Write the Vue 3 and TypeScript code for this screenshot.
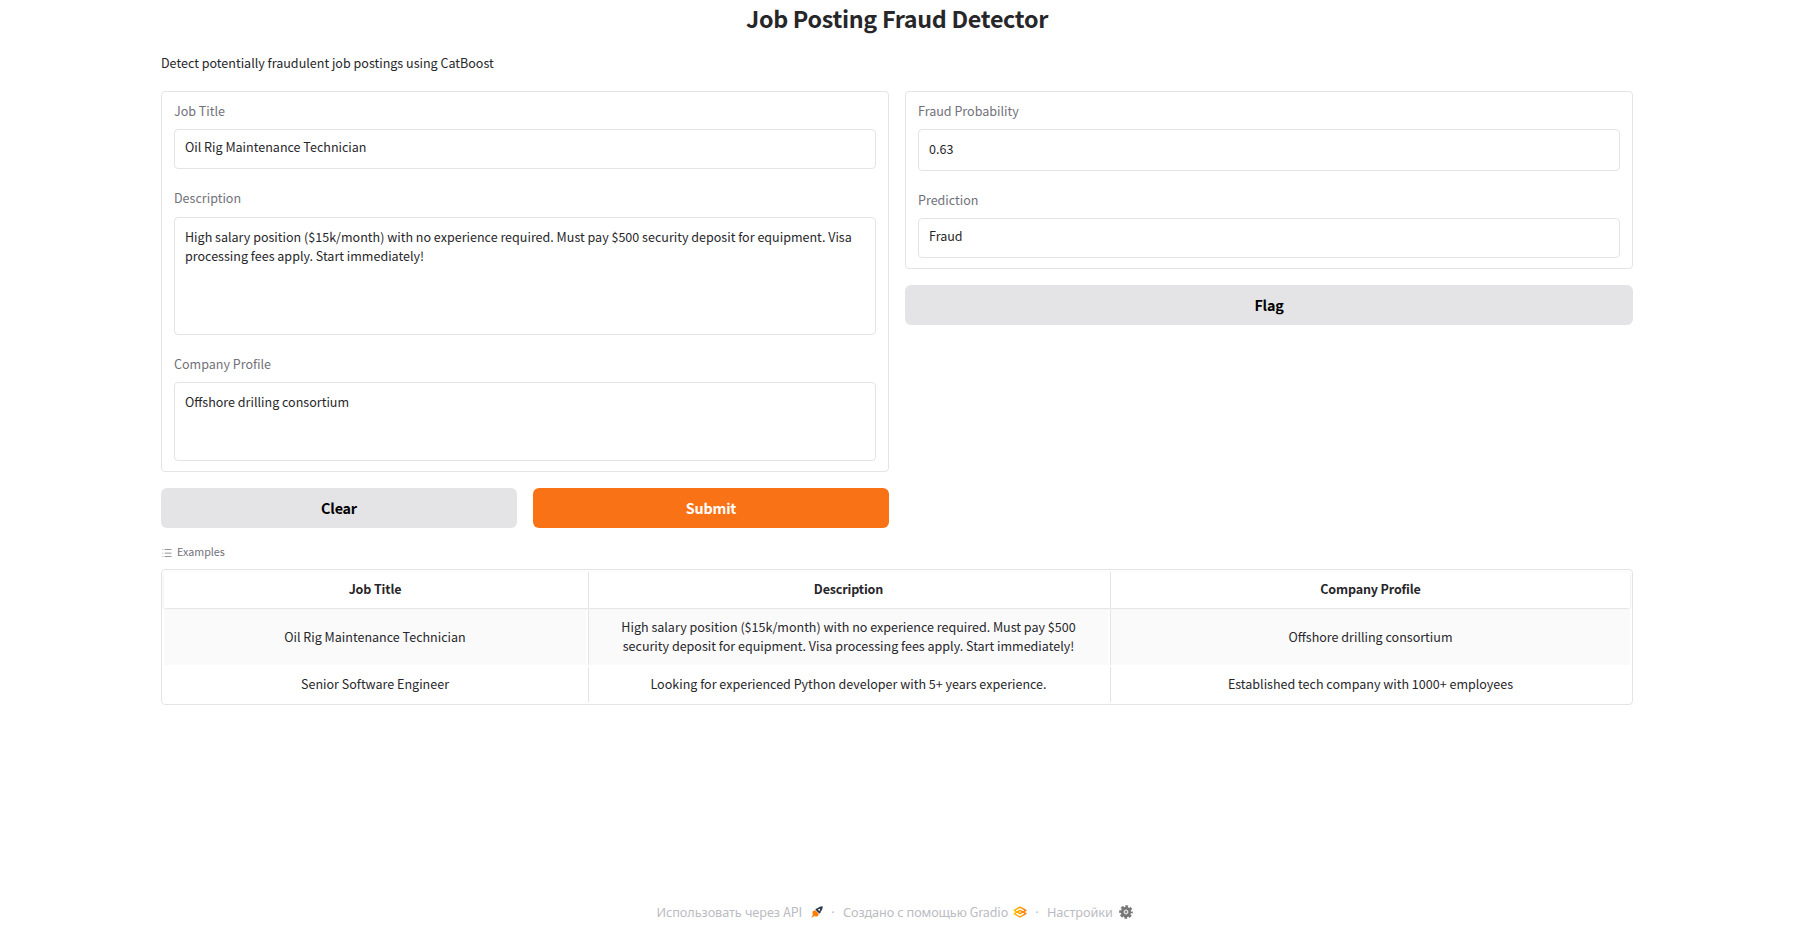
<script setup lang="ts">
import { ref } from 'vue'

interface Example {
  title: string
  description: string
  company: string
}

const examples: Example[] = [
  {
    title: 'Oil Rig Maintenance Technician',
    description:
      'High salary position ($15k/month) with no experience required. Must pay $500 security deposit for equipment. Visa processing fees apply. Start immediately!',
    company: 'Offshore drilling consortium',
  },
  {
    title: 'Senior Software Engineer',
    description: 'Looking for experienced Python developer with 5+ years experience.',
    company: 'Established tech company with 1000+ employees',
  },
]

const title = ref(examples[0].title)
const description = ref(examples[0].description)
const company = ref(examples[0].company)
const probability = ref('0.63')
const prediction = ref('Fraud')

function load(example: Example) {
  title.value = example.title
  description.value = example.description
  company.value = example.company
}

function clear() {
  title.value = ''
  description.value = ''
  company.value = ''
  probability.value = ''
  prediction.value = ''
}
</script>

<template>
  <div class="app">
    <h1>Job Posting Fraud Detector</h1>
    <p class="lead">Detect potentially fraudulent job postings using CatBoost</p>

    <div class="columns">
      <section>
        <div class="panel">
          <label class="field">
            <span class="label">Job Title</span>
            <textarea v-model="title" class="box one" spellcheck="false"></textarea>
          </label>
          <label class="field roomy">
            <span class="label">Description</span>
            <textarea v-model="description" class="box five" spellcheck="false"></textarea>
          </label>
          <label class="field">
            <span class="label">Company Profile</span>
            <textarea v-model="company" class="box three" spellcheck="false"></textarea>
          </label>
        </div>
        <div class="actions">
          <button class="btn" @click="clear">Clear</button>
          <button class="btn primary">Submit</button>
        </div>
      </section>

      <section>
        <div class="panel">
          <label class="field">
            <span class="label">Fraud Probability</span>
            <input v-model="probability" class="box number" readonly />
          </label>
          <label class="field">
            <span class="label">Prediction</span>
            <textarea v-model="prediction" class="box one" readonly></textarea>
          </label>
        </div>
        <div class="actions">
          <button class="btn">Flag</button>
        </div>
      </section>
    </div>

    <div class="examples-label">
      <svg viewBox="0 0 32 32" width="12" height="12">
        <path fill="currentColor" d="M10 6h18v2H10zm0 18h18v2H10zm0-9h18v2H10zm-6 0h2v2H4zm0-9h2v2H4zm0 18h2v2H4z" />
      </svg>
      <span>Examples</span>
    </div>

    <div class="table">
      <div class="row head">
        <div>Job Title</div>
        <div>Description</div>
        <div>Company Profile</div>
      </div>
      <div v-for="(e, i) in examples" :key="i" class="row" :class="{ odd: i % 2 === 0 }" @click="load(e)">
        <div>{{ e.title }}</div>
        <div>{{ e.description }}</div>
        <div>{{ e.company }}</div>
      </div>
    </div>

    <footer>
      <a class="api"><span>Использовать через <b>API</b></span>
        <svg class="rocket" viewBox="0 0 24 24" width="12" height="12">
          <path d="M23.5.5c-4.500 0-8 1.500-10.500 4l-3.500 1-.5 1.500 2.500 3.500 2 2L17 15l1.500-.5 1-3.500c2.500-2.500 4-6 4-10.500z" fill="#2c3a4b" />
          <circle cx="16.500" cy="7.500" r="1.900" fill="#fff" />
          <path d="M8.500 8.500 4 10 2.500 15l2 1L.5 23.500 8 19.500l1.500 2L14 20l1.500-4.500z" fill="#ff7c00" />
        </svg>
      </a>
      <i class="dot">·</i>
      <a class="built"><span>Создано с помощью <b>Gradio</b></span>
        <svg viewBox="50 80 475 415" width="14" height="12" fill="none" stroke-width="48" stroke-linejoin="round">
          <defs>
            <linearGradient id="amber" x1="60" y1="340" x2="520" y2="340" gradientUnits="userSpaceOnUse">
              <stop stop-color="#ffc400" />
              <stop offset="1" stop-color="#ff7000" />
            </linearGradient>
          </defs>
          <path d="M287.500 229 86 344.500 287.500 460 489 344.500z" stroke="url(#amber)" />
          <path d="M287.500 116 86 231.500 287.500 347 489 231.500z" stroke="url(#amber)" />
        </svg>
      </a>
      <i class="dot">·</i>
      <a class="settings"><span>Настройки</span>
        <svg viewBox="0 0 24 24" width="14" height="14" fill="none">
          <circle cx="12" cy="12" r="9.700" stroke="#777" stroke-width="4" stroke-dasharray="4.600 3.018" stroke-dashoffset="2.300" />
          <circle cx="12" cy="12" r="6.300" stroke="#777" stroke-width="5" />
          <circle cx="12" cy="12" r="3.600" stroke="#c4c4c4" stroke-width="1.500" />
          <circle cx="12" cy="12" r="2" fill="#888" />
        </svg>
      </a>
    </footer>
  </div>
</template>

<style>
body {
  margin: 0;
  background: #fff;
}
</style>

<style scoped>
.app {
  box-sizing: border-box;
  display: flex;
  flex-direction: column;
  width: 1472px;
  height: 938px;
  margin-left: 161px;
  overflow: hidden;
  font-family: 'Noto Sans CJK SC', 'Noto Sans', sans-serif;
  font-size: 12.54px;
  line-height: 19.25px;
  color: #27272a;
}
h1 {
  height: 38px;
  margin: 0;
  font-size: 23.300px;
  line-height: 36px;
  font-weight: 600;
  letter-spacing: -0.3px;
  text-align: center;
}
.lead {
  height: 20px;
  margin: 16px 0 17px;
  line-height: 18px;
}
.columns {
  display: grid;
  grid-template-columns: 1fr 1fr;
  align-items: start;
  gap: 16px;
}
.panel {
  box-sizing: border-box;
  display: flex;
  flex-direction: column;
  gap: 19px;
  padding: 9px 12px 10px;
  border: 1px solid #e4e4e7;
  border-radius: 4px;
}
.field {
  display: flex;
  flex-direction: column;
  gap: 8px;
}
.roomy {
  gap: 9px;
}
.label {
  height: 20px;
  line-height: 20px;
  color: #71717a;
}
.box {
  box-sizing: border-box;
  display: block;
  width: 100%;
  margin: 0;
  padding: 9px 10px;
  border: 1px solid #e4e4e7;
  border-radius: 4px;
  outline: none;
  resize: none;
  overflow: hidden;
  background: #fff;
  color: inherit;
  font: inherit;
  line-height: 19.25px;
}
.one {
  height: 40px;
  padding-top: 7px;
}
.number {
  height: 42px;
  padding: 8px 10px 12px;
}
.three {
  height: 79px;
}
.five {
  height: 118px;
}
.actions {
  display: flex;
  gap: 16px;
  margin-top: 16px;
}
.btn {
  flex: 1;
  height: 40px;
  padding: 0;
  border: 0;
  border-radius: 6px;
  background: #e4e4e7;
  color: #000;
  font: 600 14.320px/40px 'Noto Sans CJK SC', sans-serif;
  letter-spacing: -0.18px;
}
.primary {
  background: #f97316;
  color: #fff;
}
.examples-label {
  display: flex;
  align-items: center;
  gap: 4px;
  height: 17px;
  margin: 16px 0 8px;
  color: #71717a;
  font-size: 10.740px;
  line-height: 17px;
}
.examples-label span {
  height: 19px;
}
.table {
  display: flex;
  flex-direction: column;
  gap: 2px;
  padding: 2px;
  border: 1px solid #e4e4e7;
  border-radius: 4px;
}
.row {
  display: grid;
  grid-template-columns: 422px 520px 520px;
  gap: 2px;
  height: 35px;
}
.row > div {
  box-sizing: border-box;
  display: flex;
  align-items: center;
  justify-content: center;
  padding: 0 24px 2px;
  text-align: center;
}
.row > div + div {
  border-left: 1px solid #e4e4e7;
}
.head {
  height: 36px;
  font-weight: 600;
  letter-spacing: -0.15px;
  box-shadow: 0 1px 3px 0 rgba(0, 0, 0, 0.1), 0 1px 2px -1px rgba(0, 0, 0, 0.1);
}
.odd {
  height: 55px;
}
.row.odd > div {
  padding-bottom: 3px;
  background: #fafafa;
  line-height: 19px;
}
footer {
  display: flex;
  align-items: center;
  height: 20px;
  margin: 197px 0 0 495.500px;
  color: #bbbbc2;
  font-family: 'Noto Sans', sans-serif;
  font-size: 12.700px;
  letter-spacing: -0.07px;
  line-height: 20px;
  white-space: nowrap;
}
footer a {
  display: flex;
  align-items: center;
}
footer b {
  font-family: 'Noto Sans CJK SC', sans-serif;
  font-size: 12.530px;
  font-weight: 400;
}
footer svg {
  flex: none;
}
.api span {
  width: 154.500px;
}
.built span {
  width: 170px;
  letter-spacing: -0.12px;
}
.settings span {
  width: 72px;
}
.dot {
  width: 20px;
  font-style: normal;
  text-align: center;
}
</style>
